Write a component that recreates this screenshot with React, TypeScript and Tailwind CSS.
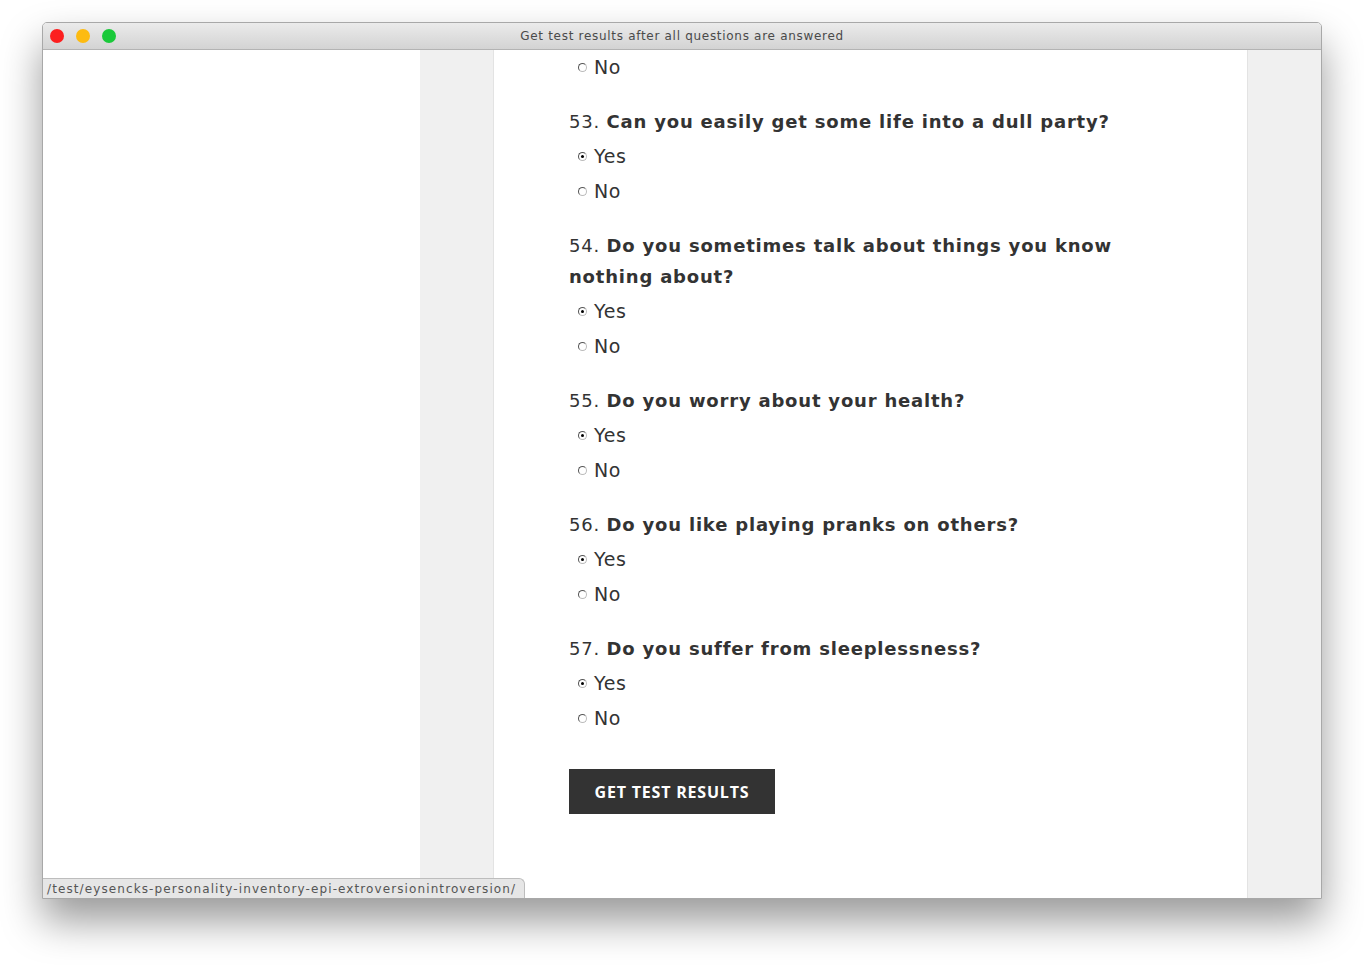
import React from 'react';

type Q = { n: number; text: string };

const questions: Q[] = [
  { n: 53, text: 'Can you easily get some life into a dull party?' },
  { n: 54, text: 'Do you sometimes talk about things you know nothing about?' },
  { n: 55, text: 'Do you worry about your health?' },
  { n: 56, text: 'Do you like playing pranks on others?' },
  { n: 57, text: 'Do you suffer from sleeplessness?' },
];

function Radio({ checked }: { checked?: boolean }) {
  return (
    <span className="w-[9px] h-[9px] rounded-full border border-[#555] border-b-[#bbb] border-r-[#bbb] bg-white flex items-center justify-center shrink-0">
      {checked && <span className="w-[3px] h-[3px] rounded-full bg-black" />}
    </span>
  );
}

function Option({ label, checked }: { label: string; checked?: boolean }) {
  return (
    <div className="h-[35px] flex items-center pl-[9px] gap-[7px]">
      <Radio checked={checked} />
      <span className="text-[19px] tracking-[0.6px] text-[#333]">{label}</span>
    </div>
  );
}

export default function App() {
  return (
    <div className="min-h-screen bg-white pt-[22px] pl-[42px]" style={{ fontFamily: '"DejaVu Sans", sans-serif' }}>
      {/* Window */}
      <div className="relative w-[1280px] h-[877px] rounded-t-[5px] border border-[#a8a8a8] shadow-[0_22px_40px_rgba(0,0,0,0.4)] flex flex-col overflow-hidden bg-white">
        {/* Title bar */}
        <div className="h-[27px] shrink-0 bg-gradient-to-b from-[#ebebeb] to-[#d3d3d3] border-b border-[#b3b3b3] flex items-center relative">
          <div className="flex items-center gap-[12px] pl-[7px]">
            <span className="w-[14px] h-[14px] rounded-full bg-[#fc1f1f]" />
            <span className="w-[14px] h-[14px] rounded-full bg-[#fdbb11]" />
            <span className="w-[14px] h-[14px] rounded-full bg-[#1ac93a]" />
          </div>
          <div className="absolute inset-0 flex items-center justify-center text-[12px] tracking-[0.7px] text-[#4a4a4a]">
            Get test results after all questions are answered
          </div>
        </div>

        {/* Content */}
        <div className="flex flex-1 min-h-0">
          <div className="w-[377px] bg-white" />
          <div className="w-[74px] bg-[#f0f0f0] border-r border-[#e3e3e3]" />
          <div className="w-[753px] bg-white pl-[75px]">
            <Option label="No" />
            {questions.map((q) => (
              <div key={q.n}>
                <div className="mt-[21px] mb-[2px] text-[18px] leading-[31px] tracking-[0.8px] text-[#333] w-[560px]">
                  <span>{q.n}.</span> <strong className="font-bold">{q.text}</strong>
                </div>
                <Option label="Yes" checked />
                <Option label="No" />
              </div>
            ))}
            <button
              className="mt-[33px] h-[45px] w-[206px] bg-[#333] text-white text-[16px] font-bold tracking-[0.8px]"
              style={{ fontFamily: '"Open Sans", sans-serif' }}
            >
              GET TEST RESULTS
            </button>
          </div>
          <div className="flex-1 bg-[#f0f0f0] border-l border-[#e3e3e3]" />
        </div>

        {/* Status bar */}
        <div className="absolute left-0 bottom-0 h-[20px] pl-[4px] pr-[8px] bg-[#e6e6e6] border-t border-r border-[#bdbdbd] rounded-tr-[6px] flex items-center text-[12px] tracking-[1.1px] text-[#555]">
          /test/eysencks-personality-inventory-epi-extroversionintroversion/
        </div>
      </div>
    </div>
  );
}
